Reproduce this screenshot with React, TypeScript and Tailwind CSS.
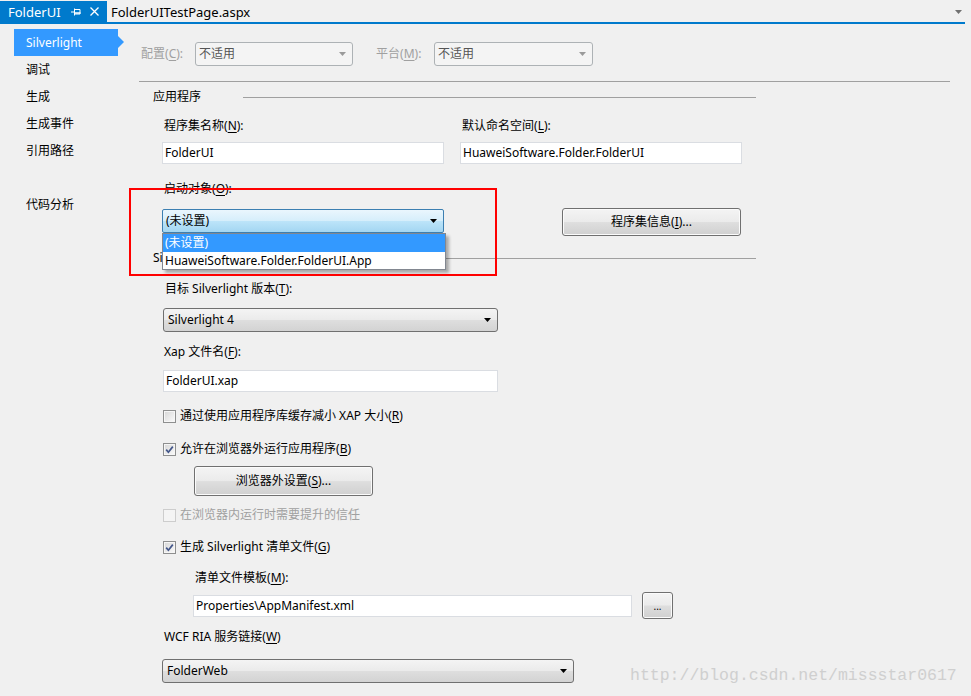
import React from 'react';

const UI = 'font-[family-name:"Noto_Sans","Noto_Sans_CJK_SC",sans-serif]';

function Caret({ color = '#000' }: { color?: string }) {
  return (
    <svg width="7" height="4" viewBox="0 0 7 4">
      <path d="M0 0h7L3.5 4z" fill={color} />
    </svg>
  );
}

function Acc({ pre, k, post = ':' }: { pre: string; k: string; post?: string }) {
  return (
    <span>
      {pre}(<u className="underline-offset-2">{k}</u>){post}
    </span>
  );
}

function CheckBox({ checked = false, disabled = false }: { checked?: boolean; disabled?: boolean }) {
  return (
    <span
      className={
        disabled
          ? 'flex h-[13px] w-[13px] shrink-0 items-center justify-center border border-[#cdcdcd] bg-[#f4f4f4]'
          : 'flex h-[13px] w-[13px] shrink-0 items-center justify-center border border-[#8e8f8f] bg-[linear-gradient(135deg,#d6d6d6,#fbfbfb)] shadow-[inset_0_0_0_1px_#f6f6f6]'
      }
    >
      {checked && (
        <svg width="11" height="11" viewBox="0 0 11 11">
          <path d="M2.2 5.6 4.4 8.2 8.8 2.6" fill="none" stroke="#44578a" strokeWidth="1.7" />
        </svg>
      )}
    </span>
  );
}

function SectionHeader({ title, lineWidth }: { title: string; lineWidth: string }) {
  return (
    <div className="flex h-[18px] w-[617px] items-center pl-[14px]">
      <span>{title}</span>
      <span className={`ml-auto h-px bg-[#a0a0a0] ${lineWidth}`} />
    </div>
  );
}

function GraySelect({ value, className }: { value: string; className: string }) {
  return (
    <div
      className={`flex h-[24px] items-center justify-between rounded-[3px] border border-[#707070] bg-[linear-gradient(to_bottom,#f4f4f4,#ebebeb_48%,#dedede_52%,#d3d3d3)] pl-[4px] pr-[6px] ${className}`}
    >
      <span>{value}</span>
      <Caret />
    </div>
  );
}

function TextBox({ value, className }: { value: string; className: string }) {
  return (
    <div className={`flex h-[22px] items-center border border-[#dadde2] bg-white pl-[2px] ${className}`}>
      {value}
    </div>
  );
}

function Button({ children, className }: { children: React.ReactNode; className: string }) {
  return (
    <div
      className={`flex items-center justify-center rounded-[3px] border border-[#707070] bg-[linear-gradient(to_bottom,#f4f4f4,#ebebeb_48%,#dedede_52%,#d0d0d0)] shadow-[inset_0_0_0_1px_#fbfbfb] ${className}`}
    >
      {children}
    </div>
  );
}

export default function App() {
  return (
    <div className={`relative h-[696px] w-[971px] overflow-hidden bg-[#f0f0f0] text-[12px] leading-[18px] text-black ${UI}`}>
      {/* document tabs */}
      <div className="flex h-[22px] items-end">
        <div className="flex h-[21px] w-[107px] items-center bg-[#007acc] pl-[8px] text-[13px] text-white">
          <span className="w-[63px]">FolderUI</span>
          <svg width="10" height="8" viewBox="0 0 10 8">
            <path d="M0 4h3M3.5 0.5v7M3.5 1.5h5.5v4.5H3.5" fill="none" stroke="#fff" strokeWidth="1" />
            <path d="M3.5 5h6" stroke="#fff" strokeWidth="1.5" />
          </svg>
          <svg className="ml-[9px]" width="9" height="9" viewBox="0 0 9 9">
            <path d="M0.5 0.5l8 8M8.5 0.5l-8 8" stroke="#fff" strokeWidth="1.3" />
          </svg>
        </div>
        <div className="flex h-[21px] items-center pl-[4px] text-[13px]">FolderUITestPage.aspx</div>
        <div className="ml-auto mr-[9px] flex h-[21px] items-center">
          <Caret color="#717171" />
        </div>
      </div>
      <div className="mr-[6px] h-[2px] bg-[#007acc]" />

      <div className="flex">
        {/* side navigation */}
        <nav className="w-[139px] shrink-0 pl-[14px] pt-[5px]">
          <div className="relative flex h-[27px] w-[104px] items-center bg-[#3399ff] pl-[12px] text-white">
            Silverlight
            <span className="absolute right-[-6px] top-[7px] h-0 w-0 border-y-[6.5px] border-l-[6px] border-y-transparent border-l-[#3399ff]" />
          </div>
          {['调试', '生成', '生成事件', '引用路径'].map((t) => (
            <div key={t} className="flex h-[27px] items-center pl-[12px]">
              {t}
            </div>
          ))}
          <div className="h-[27px]" />
          <div className="flex h-[27px] items-center pl-[12px]">代码分析</div>
        </nav>

        <main className="w-[811px]">
          {/* configuration / platform */}
          <div className="mt-[18px] flex h-[24px] items-center pl-[2px] text-[#a0a0a0]">
            <span className="w-[54px]">
              <Acc pre="配置" k="C" />
            </span>
            <div className="flex h-[24px] w-[158px] items-center justify-between rounded-[3px] border border-[#adb2b5] bg-[#f4f4f4] pl-[3px] pr-[6px] text-[#555]">
              <span>不适用</span>
              <Caret color="#9a9a9a" />
            </div>
            <span className="ml-[23px] w-[58px]">
              <Acc pre="平台" k="M" />
            </span>
            <div className="flex h-[24px] w-[159px] items-center justify-between rounded-[3px] border border-[#adb2b5] bg-[#f4f4f4] pl-[3px] pr-[6px] text-[#555]">
              <span>不适用</span>
              <Caret color="#9a9a9a" />
            </div>
          </div>
          <div className="mt-[15px] h-px w-[811px] bg-[#a0a0a0]" />

          {/* application */}
          <div className="mt-[6px]">
            <SectionHeader title="应用程序" lineWidth="w-[513px]" />
          </div>
          <div className="ml-[23px] mt-[11px] grid grid-cols-[282px_282px] gap-x-[16px]">
            <span className="pl-[2px]">
              <Acc pre="程序集名称" k="N" />
            </span>
            <span className="pl-[2px]">
              <Acc pre="默认命名空间" k="L" />
            </span>
            <TextBox value="FolderUI" className="mt-[7px] w-[282px]" />
            <TextBox value="HuaweiSoftware.Folder.FolderUI" className="mt-[7px] w-[282px]" />
          </div>

          <div className="ml-[25px] mt-[16px]">
            <Acc pre="启动对象" k="O" />
          </div>
          <div className="mt-[10px] flex h-[28px] items-start pl-[23px]">
            <div className="relative mt-[1px] flex h-[24px] w-[282px] items-center justify-between rounded-[2px] border border-[#3c7fb1] bg-[linear-gradient(to_bottom,#eaf6fd,#d6eefb_48%,#bce4f9_52%,#a3d6f2)] pl-[3px] pr-[6px]">
              <span>(未设置)</span>
              <Caret />
              <div className="absolute left-[-1px] top-[23px] z-10 w-[284px] border border-[#828790] bg-white shadow-[3px_3px_3px_rgba(0,0,0,0.3)]">
                <div className="flex h-[18px] items-center bg-[#3399ff] pl-[2px] text-white">(未设置)</div>
                <div className="flex h-[17px] items-center pl-[2px]">HuaweiSoftware.Folder.FolderUI.App</div>
              </div>
            </div>
            <Button className="ml-[118px] h-[28px] w-[179px]">
              <Acc pre="程序集信息" k="I" post="..." />
            </Button>
          </div>

          {/* silverlight build options */}
          <div className="mt-[13px]">
            <SectionHeader title="Silverlight 生成选项" lineWidth="w-[330px]" />
          </div>
          <div className="pl-[24px]">
            <div className="mt-[13px] pl-[2px]">
              <Acc pre="目标 Silverlight 版本" k="T" />
            </div>
            <GraySelect value="Silverlight 4" className="mt-[10px] w-[335px]" />
            <div className="mt-[11px] pl-[1px]">
              <Acc pre="Xap 文件名" k="F" />
            </div>
            <TextBox value="FolderUI.xap" className="mt-[9px] w-[335px]" />

            <div className="mt-[15px] flex h-[18px] items-center gap-[4px]">
              <CheckBox />
              <Acc pre="通过使用应用程序库缓存减小 XAP 大小" k="R" post="" />
            </div>
            <div className="mt-[15px] flex h-[18px] items-center gap-[4px]">
              <CheckBox checked />
              <Acc pre="允许在浏览器外运行应用程序" k="B" post="" />
            </div>
            <Button className="ml-[31px] mt-[8px] h-[30px] w-[179px]">
              <Acc pre="浏览器外设置" k="S" post="..." />
            </Button>
            <div className="mt-[10px] flex h-[18px] items-center gap-[4px] text-[#a0a0a0]">
              <CheckBox disabled />
              <span>在浏览器内运行时需要提升的信任</span>
            </div>
            <div className="mt-[14px] flex h-[18px] items-center gap-[4px]">
              <CheckBox checked />
              <Acc pre="生成 Silverlight 清单文件" k="G" post="" />
            </div>

            <div className="mt-[13px] pl-[32px]">
              <Acc pre="清单文件模板" k="M" />
            </div>
            <div className="mt-[5px] flex h-[27px] items-start pl-[30px]">
              <TextBox value="Properties\AppManifest.xml" className="mt-[3px] w-[439px]" />
              <Button className="ml-[10px] h-[27px] w-[31px] text-[10px]">...</Button>
            </div>

            <div className="mt-[9px] pl-[1px]">
              <Acc pre="WCF RIA 服务链接" k="W" post="" />
            </div>
            <GraySelect value="FolderWeb" className="-ml-[1px] mt-[13px] w-[412px]" />
          </div>
        </main>
      </div>

      {/* annotation drawn over the screenshot */}
      <div className="absolute left-[129px] top-[188px] z-20 h-[88px] w-[368px] border-2 border-[#ff0000]" />
      <div className="absolute left-[630px] top-[665px] font-[family-name:'Liberation_Mono',monospace] text-[16.5px] leading-[22px] text-[#cfcfcf]">
        http://blog.csdn.net/missstar0617
      </div>
    </div>
  );
}
